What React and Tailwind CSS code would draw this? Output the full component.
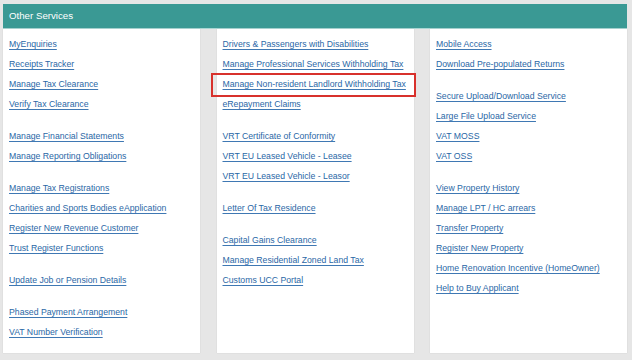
import React from "react";

const col1 = [
  ["MyEnquiries", "Receipts Tracker", "Manage Tax Clearance", "Verify Tax Clearance"],
  ["Manage Financial Statements", "Manage Reporting Obligations"],
  ["Manage Tax Registrations", "Charities and Sports Bodies eApplication", "Register New Revenue Customer", "Trust Register Functions"],
  ["Update Job or Pension Details"],
  ["Phased Payment Arrangement", "VAT Number Verification"],
];
const col2 = [
  ["Drivers & Passengers with Disabilities", "Manage Professional Services Withholding Tax", "Manage Non-resident Landlord Withholding Tax", "eRepayment Claims"],
  ["VRT Certificate of Conformity", "VRT EU Leased Vehicle - Leasee", "VRT EU Leased Vehicle - Leasor"],
  ["Letter Of Tax Residence"],
  ["Capital Gains Clearance", "Manage Residential Zoned Land Tax", "Customs UCC Portal"],
];
const col3 = [
  ["Mobile Access", "Download Pre-populated Returns"],
  ["Secure Upload/Download Service", "Large File Upload Service", "VAT MOSS", "VAT OSS"],
  ["View Property History", "Manage LPT / HC arrears", "Transfer Property", "Register New Property", "Home Renovation Incentive (HomeOwner)", "Help to Buy Applicant"],
];

function Column({ groups }) {
  return (
    <div className="w-[197px] bg-white pt-[5px] pb-[11px] pl-[6px] pr-[4px] flex flex-col gap-[12px] shadow-[0_0_1px_rgba(0,0,0,0.15)]">
      {groups.map((g, i) => (
        <ul key={i} className="flex flex-col">
          {g.map((t) => (
            <li key={t} className="h-[20px] leading-[20px] whitespace-nowrap">
              <a
                href="#"
                className="relative text-[#2a67a6] underline decoration-[#3f78b3] underline-offset-[2px] decoration-1"
              >
                {t}
                {t === "Manage Non-resident Landlord Withholding Tax" && (
                  <span className="absolute left-[-12px] right-[-10px] top-[-6px] bottom-[-8px] border-2 border-[#d8312c] pointer-events-none" />
                )}
              </a>
            </li>
          ))}
        </ul>
      ))}
    </div>
  );
}

export default function App() {
  return (
    <div
      className="w-[632px] h-[360px] bg-[#e6e6e6] pt-[4px] pl-[3px] overflow-hidden"
      style={{ fontFamily: '"Liberation Sans", Arial, sans-serif' }}
    >
      <div className="w-[624px]">
        <div className="h-[25px] bg-[#3a9994] flex items-center pl-[6px] text-white text-[9.7px] border-b border-[#a9d6d3]">
          Other Services
        </div>
        <div className="flex justify-between items-stretch h-[324px] text-[8.7px]">
          <Column groups={col1} />
          <Column groups={col2} />
          <Column groups={col3} />
        </div>
      </div>
    </div>
  );
}
